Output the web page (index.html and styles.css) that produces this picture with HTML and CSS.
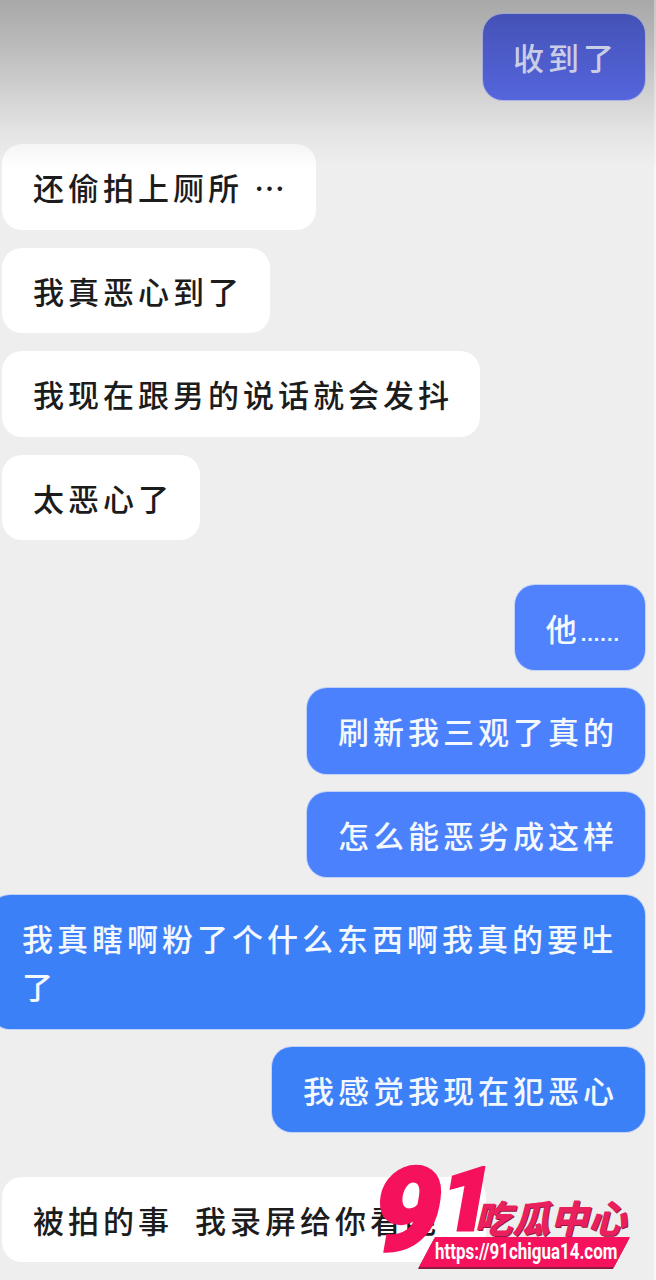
FILE: index.html
```html
<!DOCTYPE html>
<html lang="zh">
<head>
<meta charset="utf-8">
<title>聊天记录</title>
<link rel="stylesheet" href="styles.css">
</head>
<body>
<main class="chat">
  <div class="shade"></div>
  <div class="msg out faded">收到了</div>
  <div class="msg in gap-top first">还偷拍上厕所 …</div>
  <div class="msg in">我真恶心到了</div>
  <div class="msg in">我现在跟男的说话就会发抖</div>
  <div class="msg in">太恶心了</div>
  <div class="msg out gap-top tone-a">他<span class="dots">......</span></div>
  <div class="msg out tone-b">刷新我三观了真的</div>
  <div class="msg out tone-b">怎么能恶劣成这样</div>
  <div class="msg out tone-c wide">我真瞎啊粉了个什么东西啊我真的要吐了</div>
  <div class="msg out tone-c">我感觉我现在犯恶心</div>
  <div class="msg in gap-top last">被拍的事&nbsp;&nbsp;我录屏给你看吧</div>
</main>
<div class="logo">
  <span class="logo-nine">9</span>
  <span class="logo-one">1</span>
  <span class="logo-name">吃瓜中心</span>
  <div class="logo-url"><span class="logo-url-text">https://91chigua14.com</span></div>
</div>
</body>
</html>
```
FILE: styles.css
```css
* { box-sizing: border-box; }
html, body { margin: 0; padding: 0; }
body {
  width: 656px;
  height: 1280px;
  overflow: hidden;
  position: relative;
  background: #eeeeee;
  font-family: "Noto Sans CJK SC", "Noto Sans", sans-serif;
}
.chat {
  display: flex;
  flex-direction: column;
  align-items: flex-start;
  gap: 18px;
  padding: 14px 9px 0 2px;
  height: 1280px;
  border-right: 2px solid #f8f8f8;
}
.shade {
  position: absolute;
  left: 0;
  top: 0;
  width: 100%;
  height: 165px;
  border-right: 2px solid rgba(255, 255, 255, 0.35);
  background: linear-gradient(#a8a8a8 0, #bdbdbd 50px, #d5d5d5 100px, #e3e3e3 130px, #eeeeee 165px);
}
.msg {
  position: relative;
  height: 85.5px;
  padding: 21px 27px 20.5px 31px;
  border-radius: 20px;
  font-size: 31px;
  line-height: 44px;
  letter-spacing: 4px;
  font-weight: 500;
  white-space: nowrap;
}
.in { background: #ffffff; color: #1c1c1c; }
.first { background: linear-gradient(#f5f5f5, #ffffff 24px); }
.last { width: 484px; }
.out {
  align-self: flex-end;
  color: #f4f8ff;
  background: #4b80fb;
  box-shadow: 0 0 0 1px rgba(140, 175, 255, 0.45);
}
.faded {
  padding-left: 30px;
  background: linear-gradient(#4452b6, #5565dc);
  box-shadow: 0 0 0 1px rgba(150, 160, 235, 0.6);
  color: #c9cde6;
}
.tone-a { background: #5082fd; padding-right: 25px; }
.tone-b { background: #4b81fc; }
.tone-c { background: #3c80f8; }
.gap-top { margin-top: 26.5px; }
.dots {
  font-family: "Liberation Sans", sans-serif;
  font-size: 20px;
  font-weight: 700;
  line-height: 0;
  letter-spacing: 1px;
}
.wide {
  width: 655px;
  height: 133.5px;
  padding: 19px 20px 18.5px 32px;
  line-height: 48px;
  white-space: normal;
}
.logo {
  position: absolute;
  left: 376px;
  top: 1166px;
  width: 256px;
  height: 110px;
  color: #f5115c;
  font-family: "Roboto", "Liberation Sans", sans-serif;
}
.logo-nine,
.logo-one {
  position: absolute;
  font-weight: 900;
  line-height: 1;
  white-space: nowrap;
  -webkit-text-stroke: 3px #f5115c;
  transform: skewX(-10deg);
}
.logo-nine {
  left: -1px;
  top: -14px;
  font-size: 116px;
}
.logo-one {
  left: 66px;
  top: -10px;
  font-size: 88px;
  text-shadow: 1px 1px 0 #8d1a3f;
}
.logo-name {
  position: absolute;
  left: 98px;
  top: 31px;
  font-family: "Noto Sans CJK SC", sans-serif;
  font-size: 38px;
  line-height: 40px;
  font-weight: 900;
  font-style: italic;
  white-space: nowrap;
  color: #ea1f5d;
  text-shadow: 1px 1px 0 #8d1a3f;
}
.logo-url {
  position: absolute;
  left: 51px;
  top: 71px;
  width: 195px;
  height: 30px;
}
.logo-url::before {
  content: "";
  position: absolute;
  inset: 0;
  transform: skewX(-28deg);
  background: #f5115c;
  box-shadow: 0 2px 0 #8d1a3f;
}
.logo-url-text {
  position: absolute;
  left: 8px;
  top: 0;
  font-size: 22px;
  font-weight: 700;
  line-height: 30px;
  white-space: nowrap;
  color: #ffffff;
  transform: scaleX(0.77);
  transform-origin: left center;
}
```
